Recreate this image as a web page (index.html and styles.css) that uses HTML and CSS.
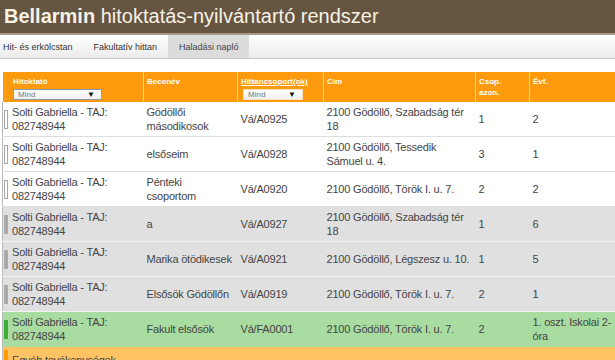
FILE: index.html
```html
<!DOCTYPE html>
<html lang="hu">
<head>
<meta charset="utf-8">
<title>Bellarmin hitoktatás-nyilvántartó rendszer</title>
<link rel="stylesheet" href="styles.css">
</head>
<body>
<header class="topbar">
  <h1 class="title"><b>Bellarmin</b> hitoktatás-nyilvántartó rendszer</h1>
</header>
<nav class="tabs">
  <a class="tab first">Hit- és erkölcstan</a>
  <a class="tab">Fakultatív hittan</a>
  <a class="tab active">Haladási napló</a>
</nav>
<table class="grid">
  <colgroup>
    <col class="c1"><col class="c2"><col class="c3"><col class="c4"><col class="c5"><col class="c6">
  </colgroup>
  <thead>
    <tr>
      <th class="first">Hitoktató<span class="sel wide"><span>Mind</span><i>▼</i></span></th>
      <th>Becenév</th>
      <th><a class="hlink">Hittancsoport(ok)</a><span class="sel narrow"><span>Mind</span><i>▼</i></span></th>
      <th>Cím</th>
      <th>Csop.<br>azon.</th>
      <th>Évf.</th>
    </tr>
  </thead>
  <tbody>
    <tr class="white">
      <td class="first"><div class="who"><span class="bar"></span><span>Solti Gabriella - TAJ: 082748944</span></div></td>
      <td class="nick">Gödöllői másodikosok</td><td>Vá/A0925</td><td>2100 Gödöllő, Szabadság tér 18</td><td>1</td><td>2</td>
    </tr>
    <tr class="white">
      <td class="first"><div class="who"><span class="bar"></span><span>Solti Gabriella - TAJ: 082748944</span></div></td>
      <td class="nick">elsőseim</td><td>Vá/A0928</td><td>2100 Gödöllő, Tessedik Sámuel u. 4.</td><td>3</td><td>1</td>
    </tr>
    <tr class="white">
      <td class="first"><div class="who"><span class="bar"></span><span>Solti Gabriella - TAJ: 082748944</span></div></td>
      <td class="nick">Pénteki csoportom</td><td>Vá/A0920</td><td>2100 Gödöllő, Török I. u. 7.</td><td>2</td><td>2</td>
    </tr>
    <tr class="gray">
      <td class="first"><div class="who"><span class="bar"></span><span>Solti Gabriella - TAJ: 082748944</span></div></td>
      <td class="nick">a</td><td>Vá/A0927</td><td>2100 Gödöllő, Szabadság tér 18</td><td>1</td><td>6</td>
    </tr>
    <tr class="gray">
      <td class="first"><div class="who"><span class="bar"></span><span>Solti Gabriella - TAJ: 082748944</span></div></td>
      <td class="nick">Marika ötödikesek</td><td>Vá/A0921</td><td>2100 Gödöllő, Légszesz u. 10.</td><td>1</td><td>5</td>
    </tr>
    <tr class="gray">
      <td class="first"><div class="who"><span class="bar"></span><span>Solti Gabriella - TAJ: 082748944</span></div></td>
      <td class="nick">Elsősök Gödöllőn</td><td>Vá/A0919</td><td>2100 Gödöllő, Török I. u. 7.</td><td>2</td><td>1</td>
    </tr>
    <tr class="green">
      <td class="first"><div class="who"><span class="bar"></span><span>Solti Gabriella - TAJ: 082748944</span></div></td>
      <td class="nick">Fakult elsősök</td><td>Vá/FA0001</td><td>2100 Gödöllő, Török I. u. 7.</td><td>2</td><td>1. oszt. Iskolai 2-óra</td>
    </tr>
    <tr class="other">
      <td class="first" colspan="6"><div class="who"><span class="bar"></span><span>Egyéb tevékenységek</span></div></td>
    </tr>
  </tbody>
</table>
</body>
</html>
```
FILE: styles.css
```css
html, body {
  margin: 0;
  padding: 0;
  overflow: hidden;
  background: #fff;
  font-family: "Liberation Sans", Arial, sans-serif;
}

.topbar {
  height: 33px;
  background: #665541;
  border-bottom: 2px solid #a89a88;
}

.title {
  margin: 0;
  padding-left: 4px;
  font-size: 20px;
  line-height: 33px;
  font-weight: normal;
  color: #f8f2e6;
  white-space: nowrap;
}

.title b {
  font-weight: bold;
}

.tabs {
  display: flex;
  height: 23px;
  background: linear-gradient(#ffffff, #ebebeb);
  border-bottom: 1px solid #c9c9c9;
}

.tab {
  display: flex;
  align-items: center;
  padding: 0 11px 0 11px;
  font-size: 9px;
  color: #333;
}

.tab.first {
  padding-left: 3px;
  padding-right: 10px;
}

.tab.active {
  background: #dcdcdc;
  color: #444;
  padding: 0 10px 0 11px;
}

.grid {
  margin: 13px 0 0 2px;
  border-collapse: collapse;
  table-layout: fixed;
  width: 622px;
  font-size: 11px;
  color: #444;
}

.c1 { width: 141px; }
.c2 { width: 94px; }
.c3 { width: 86px; }
.c4 { width: 152px; }
.c5 { width: 54px; }
.c6 { width: 95px; }

.grid th {
  background: #fd9a0e;
  color: #fff;
  font-size: 8px;
  font-weight: bold;
  text-align: left;
  vertical-align: top;
  line-height: 11px;
  padding: 4px 3px 2px 3px;
  height: 24px;
  border-left: 1px solid #fcd7a4;
}

.grid th.first {
  padding-left: 10px;
  border-left: 1px solid #fff;
}

.hlink {
  color: #fff;
  text-decoration: underline;
}

.sel {
  display: flex;
  justify-content: space-between;
  align-items: center;
  box-sizing: border-box;
  height: 11px;
  margin-top: 2px;
  padding: 0 6px 0 4px;
  background: linear-gradient(#ffffff, #f1f1f1);
  font-weight: normal;
  font-size: 8px;
  line-height: 9px;
  color: #777;
}

.sel i {
  font-style: normal;
  color: #111;
  font-size: 8px;
}

.sel.wide {
  width: 89px;
  border: 1px solid #8d99ad;
}

.sel.narrow {
  width: 60px;
  margin-left: 2px;
  border: 1px solid #fbe3c2;
}

.grid td {
  padding: 3px 3px;
  line-height: 14px;
  letter-spacing: -0.2px;
  vertical-align: middle;
  border-bottom: 1px solid #dedede;
}

.grid td.nick {
  padding-right: 5px;
}

.grid td.first {
  padding-left: 1px;
  border-left: 1px solid #b9b9b9;
}

.who {
  display: flex;
  align-items: center;
  gap: 4px;
}

.bar {
  flex: none;
  box-sizing: border-box;
  width: 4px;
  height: 19px;
}

.white { background: #fff; }
.white .bar { border: 1px solid #a8a8a8; background: #fff; }

.gray { background: #e0e0e0; }
.gray td { border-bottom-color: #f3f3f3; }
.gray .bar { background: #a9a9a9; }

.green { background: #a9dca1; }
.green td { border-bottom-color: #a9dca1; }
.green .bar { background: #3aae36; }

.other { background: #ffc364; }
.other .bar { background: #ff9a00; }
```
